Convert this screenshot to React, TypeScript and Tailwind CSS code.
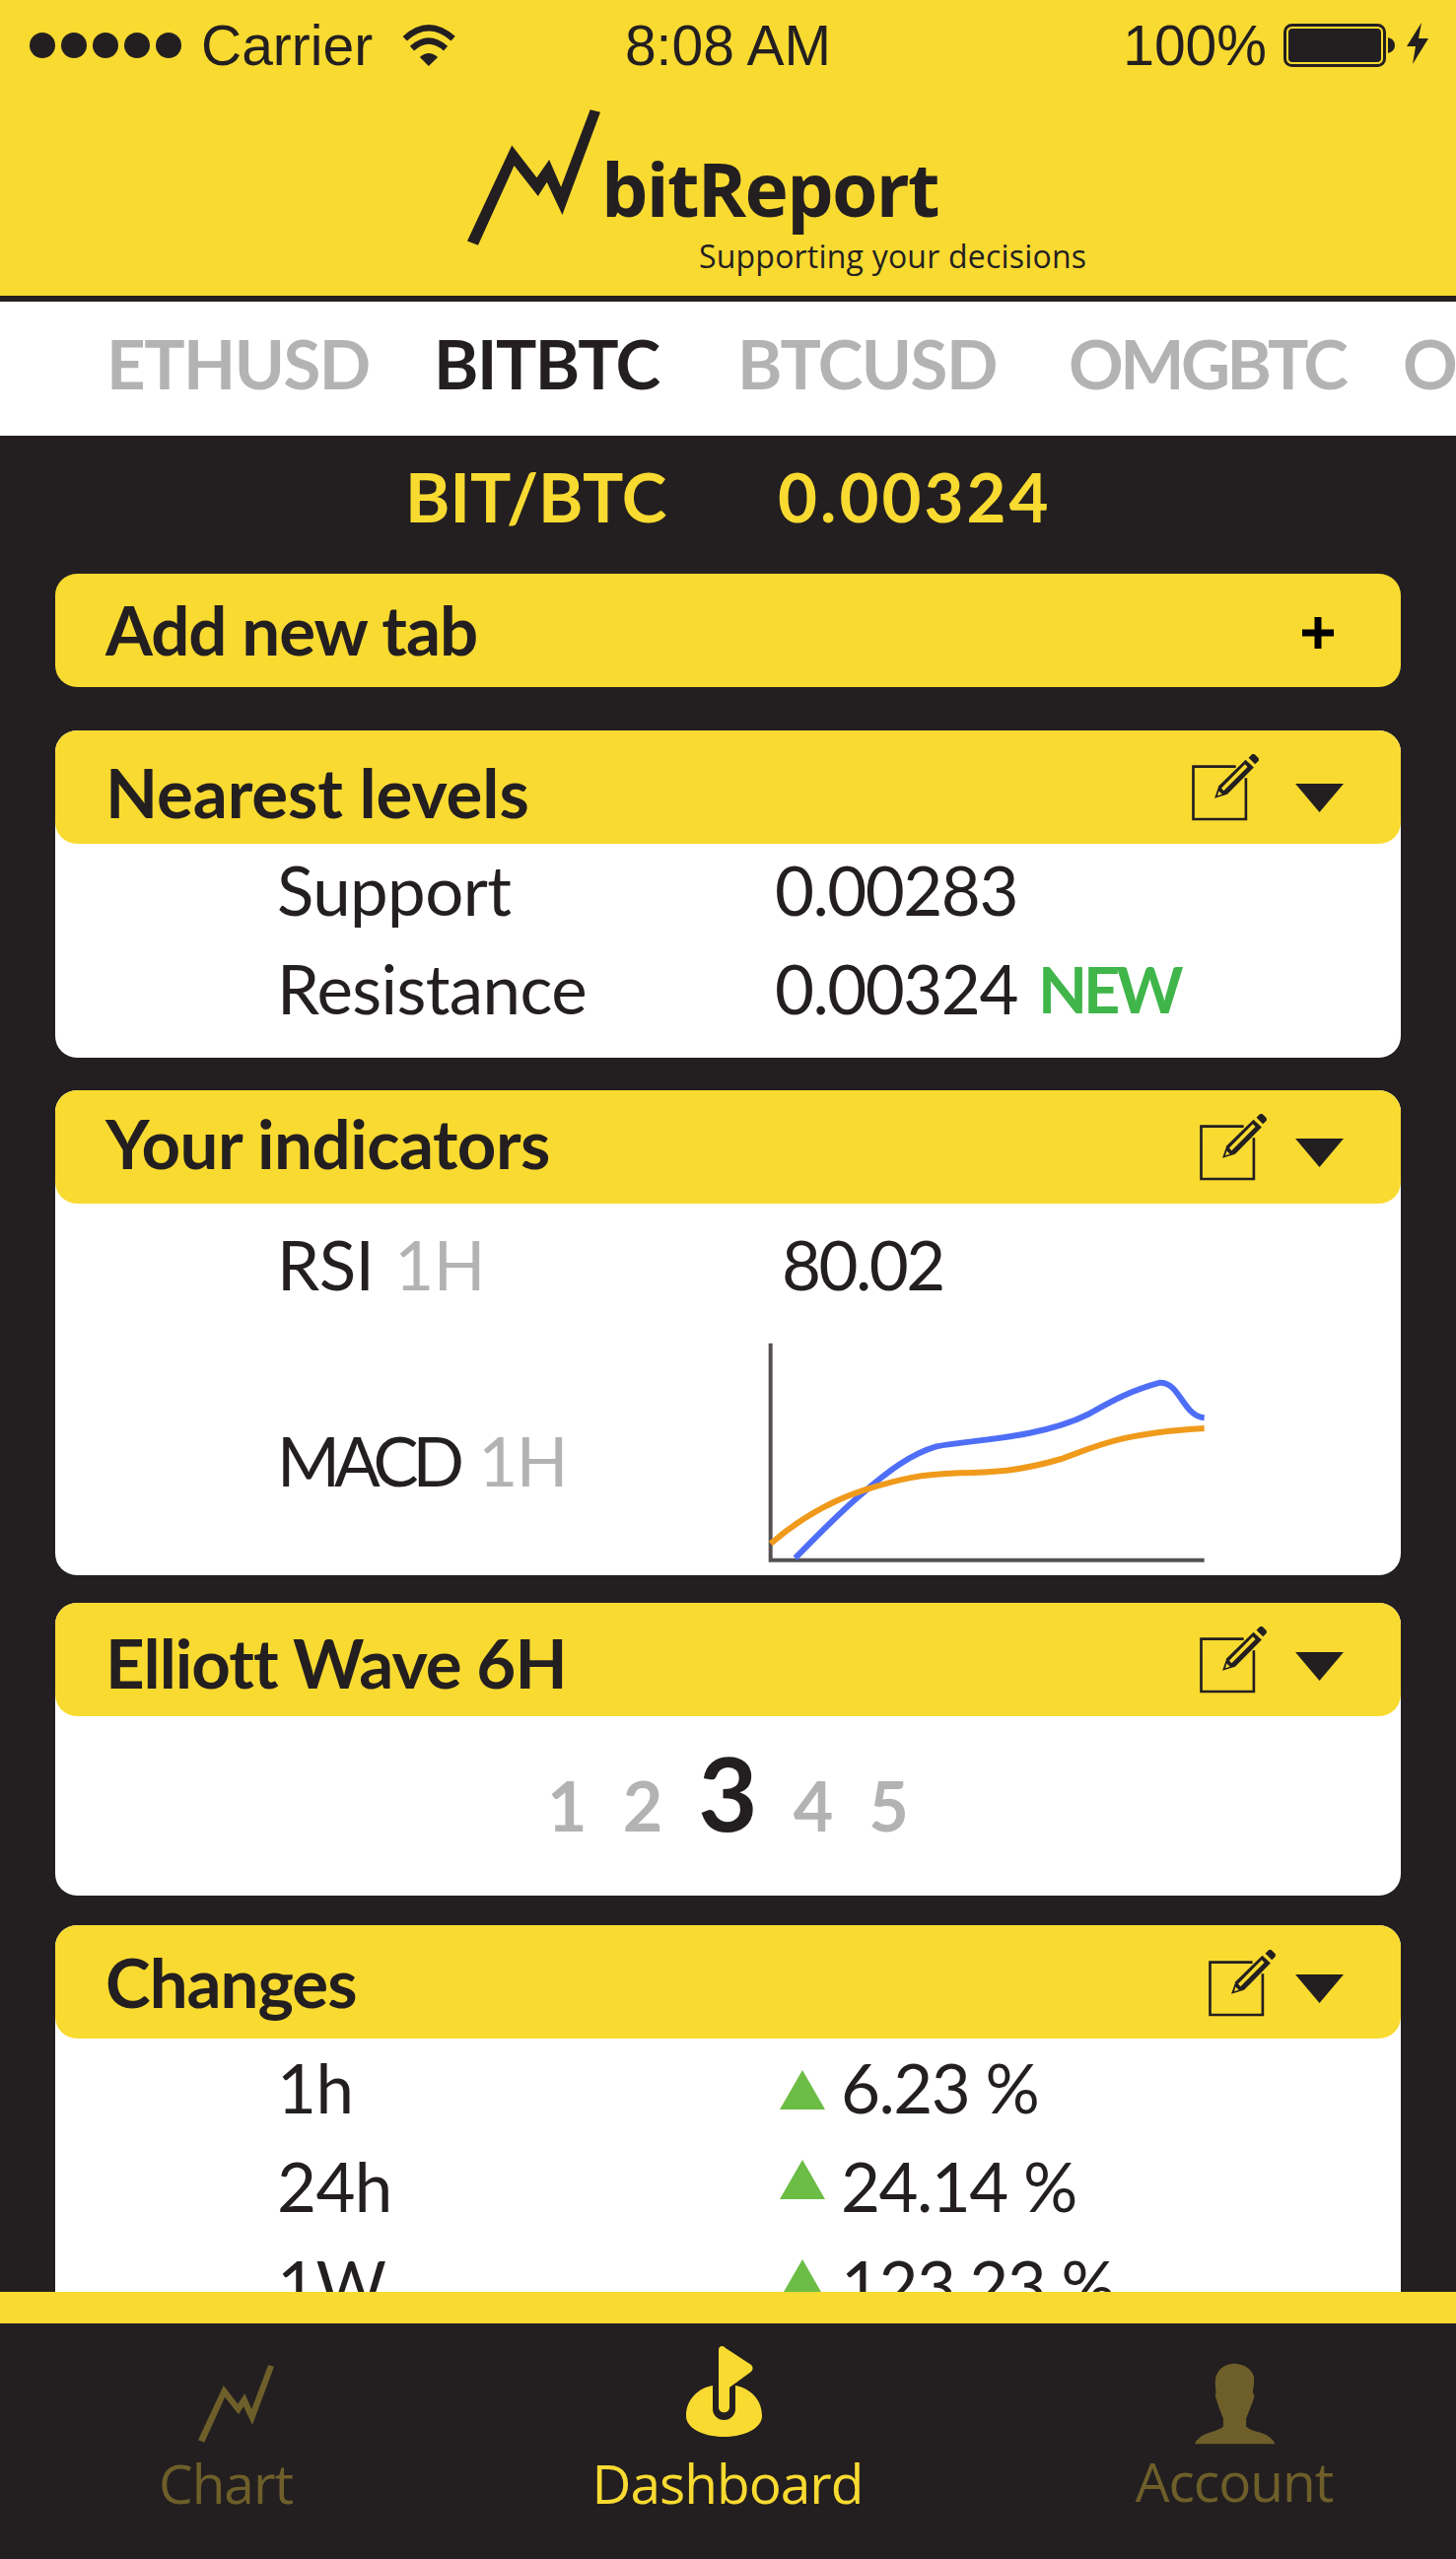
import React from 'react';

const LOGO_POINTS = '102,465 135,478 245,235 318,328 345,285 392,385 508,72 477,64 388,300 352,217 314,272 238,173';

const Logo = ({ className, fill }: { className: string; fill: string }) => (
  <svg viewBox="102 64 406 414" className={className}>
    <polygon points={LOGO_POINTS} fill={fill} />
  </svg>
);

const EditIcon = ({ className }: { className: string }) => (
  <svg viewBox="85 45 210 205" className={`w-[70px] h-[68px] shrink-0 ${className}`}>
    <path d="M222 83H92V244H253V118" fill="none" stroke="#231f20" strokeWidth="8" />
    <polygon points="157,180 170,142 252,62 277,86 196,168" fill="#231f20" />
    <polygon points="178,149 250,76 258,84 185,157" fill="#f9da31" />
    <polygon points="170,158 180,168 166,172" fill="#f9da31" />
    <polygon points="261,56 272,45 279,45 292,58 292,65 281,76" fill="#231f20" />
  </svg>
);

const Arrow = ({ className }: { className: string }) => (
  <svg viewBox="0 0 49 29" className={`w-[49px] h-[29px] shrink-0 ${className}`}>
    <polygon points="0,0 49,0 24.5,29" fill="#231f20" />
  </svg>
);

const Up = ({ className }: { className: string }) => (
  <svg viewBox="0 0 46 40" className={`w-[46px] h-[40px] shrink-0 mr-[16px] ${className}`}>
    <polygon points="23,0 46,40 0,40" fill="#6cbd45" />
  </svg>
);

type CardProps = {
  title: string;
  titleClass: string;
  editClass: string;
  arrowClass: string;
  className: string;
  children: React.ReactNode;
};

const Card = ({ title, titleClass, editClass, arrowClass, className, children }: CardProps) => (
  <div className={`mx-[56px] bg-white rounded-[22px] shrink-0 ${className}`}>
    <div className="h-[115px] bg-[#f9da31] rounded-[22px] flex items-start pl-[51px] pr-[58px]">
      <h2 className={`flex-1 text-[69px] font-bold leading-[80px] ${titleClass}`}>{title}</h2>
      <EditIcon className={editClass} />
      <Arrow className={arrowClass} />
    </div>
    {children}
  </div>
);

const Row = ({ label, children }: { label: React.ReactNode; children: React.ReactNode }) => (
  <div className="flex pl-[225px] text-[69px] leading-[80px] tracking-[-1.5px] whitespace-nowrap">
    <div className="w-[505px] shrink-0 tracking-[-0.6px]">{label}</div>
    <div className="flex items-start">{children}</div>
  </div>
);

export default function App() {
  return (
    <div className="w-[1477px] h-[2596px] flex flex-col overflow-hidden bg-[#231f20] text-[#231f20] font-['Lato',sans-serif]">
      {/* header */}
      <header className="h-[306px] shrink-0 bg-[#f9da31] border-b-[6px] border-[#231f20]">
        <div className="h-[92px] grid grid-cols-3 font-['Liberation_Sans',sans-serif] text-[57px] leading-[92px]">
          <div className="flex items-center pl-[30px]">
            <div className="flex gap-[6px]">
              <span className="w-[26px] h-[26px] rounded-full bg-[#231f20]" />
              <span className="w-[26px] h-[26px] rounded-full bg-[#231f20]" />
              <span className="w-[26px] h-[26px] rounded-full bg-[#231f20]" />
              <span className="w-[26px] h-[26px] rounded-full bg-[#231f20]" />
              <span className="w-[26px] h-[26px] rounded-full bg-[#231f20]" />
            </div>
            <span className="ml-[20px]">Carrier</span>
            <svg viewBox="1165 45 167 127" className="w-[56px] h-[42px] ml-[29px]">
              <path d="M1175 88Q1248 22 1323 88" fill="none" stroke="#231f20" strokeWidth="19" />
              <path d="M1197 118Q1248 72 1300 118" fill="none" stroke="#231f20" strokeWidth="19" />
              <path d="M1221 145Q1248 120 1276 145L1248 172Z" fill="#231f20" />
            </svg>
          </div>
          <div className="text-center">8:08 AM</div>
          <div className="flex items-center justify-end pr-[28px]">
            <span>100%</span>
            <svg viewBox="0 0 113 44" className="w-[113px] h-[44px] ml-[17px] shrink-0">
              <rect x="1.5" y="1.5" width="101" height="41" rx="7" fill="none" stroke="#231f20" strokeWidth="3" />
              <rect x="5" y="5" width="94" height="34" rx="4" fill="#231f20" />
              <path d="M106 14Q113 16 113 22Q113 28 106 30Z" fill="#231f20" />
            </svg>
            <svg viewBox="0 0 22 42" className="w-[22px] h-[42px] ml-[12px] shrink-0 -mt-[4px]">
              <polygon points="15,0 0,24 9,24 6,42 22,16 12,16" fill="#231f20" />
            </svg>
          </div>
        </div>
        <div className="flex pl-[474px] pt-[19px] font-['Open_Sans',sans-serif]">
          <Logo className="w-[135px] h-[138px] shrink-0" fill="#231f20" />
          <div className="ml-[1px] pt-[35px]">
            <div className="text-[75px] font-bold leading-[90px] tracking-[-1.7px]">bitReport</div>
            <div className="ml-[99px] mt-[4px] text-[32px] leading-[40px] tracking-[0.2px] whitespace-nowrap">Supporting your decisions</div>
          </div>
        </div>
      </header>

      {/* pair tabs */}
      <nav className="h-[136px] shrink-0 bg-white flex pl-[108px] overflow-hidden text-[69px] font-bold leading-[126px] tracking-[-1.5px] text-[#b3b3b3] whitespace-nowrap">
        <div className="w-[332px] shrink-0">ETHUSD</div>
        <div className="w-[308px] shrink-0 text-[#231f20]">BITBTC</div>
        <div className="w-[336px] shrink-0">BTCUSD</div>
        <div className="w-[339px] shrink-0 tracking-[-3.5px]">OMGBTC</div>
        <div className="shrink-0">O</div>
      </nav>

      {/* dashboard content */}
      <main className="flex-1 min-h-0 overflow-hidden flex flex-col">
        <div className="flex shrink-0 pt-[22px] pl-[411px] text-[69px] font-bold leading-[80px] text-[#f9da31]">
          <div className="w-[378px]">BIT/BTC</div>
          <div className="tracking-[3px]">0.00324</div>
        </div>

        <div className="mx-[56px] mt-[38px] h-[115px] shrink-0 bg-[#f9da31] rounded-[22px] flex items-start justify-between pl-[51px] pr-[68px] pt-[17px] text-[69px] font-bold leading-[80px] tracking-[-1px]">
          <span>Add new tab</span>
          <svg viewBox="0 0 32 32" className="w-[32px] h-[32px] mt-[27px]">
            <path d="M12.5 0h7v12.5H32v7H19.5V32h-7V19.5H0v-7h12.5z" fill="#000" />
          </svg>
        </div>

        <Card title="Nearest levels" className="mt-[44px]" titleClass="pt-[23px] tracking-[-0.1px]" editClass="mt-[24px]" arrowClass="ml-[36px] mt-[54px]">
          <div className="pt-[7px] pb-[30px] flex flex-col gap-[20px]">
            <Row label="Support">0.00283</Row>
            <Row label="Resistance">
              0.00324<span className="ml-[21px] font-bold text-[65px] tracking-[-4px] text-[#3fb54a]">NEW</span>
            </Row>
          </div>
        </Card>

        <Card title="Your indicators" className="mt-[33px]" titleClass="pt-[14px] tracking-[-0.5px]" editClass="mt-[24px]" arrowClass="ml-[28px] mt-[49px]">
          <div className="pt-[22px] pb-[12px]">
            <Row label={<>RSI <span className="ml-[4px] text-[#b3b3b3]">1H</span></>}>
              <span className="ml-[7px] tracking-[-2.5px]">80.02</span>
            </Row>
            <div className="flex pl-[225px] mt-[37px] text-[69px] leading-[80px] tracking-[-1.5px]">
              <div className="w-[498px] shrink-0 pt-[82px]">
                <span className="tracking-[-6px]">MACD</span> <span className="ml-[4px] text-[#b3b3b3]">1H</span>
              </div>
              <svg viewBox="57 30 1335 678" className="w-[445px] h-[226px] shrink-0">
                <path d="M65 38V698H1385" fill="none" stroke="#555153" strokeWidth="12" />
                <path d="M140 692C210 620 290 540 350 490C420 430 490 375 570 352C640 338 730 335 850 312C930 296 980 280 1030 255C1090 222 1150 185 1250 158C1310 155 1320 260 1385 265" fill="none" stroke="#4f6ef7" strokeWidth="18" />
                <path d="M65 648C150 575 240 520 350 485C460 450 520 437 640 433C740 431 820 428 950 390C1060 350 1130 312 1385 297" fill="none" stroke="#f09a1c" strokeWidth="18" />
              </svg>
            </div>
          </div>
        </Card>

        <Card title="Elliott Wave 6H" className="mt-[28px]" titleClass="pt-[21px] tracking-[-1px]" editClass="mt-[24px]" arrowClass="ml-[28px] mt-[50px]">
          <div className="pt-[25px] pb-[40px] flex items-baseline justify-center gap-[36px] font-bold text-[70px] leading-[104px] text-[#b3b3b3]">
            <span>1</span>
            <span>2</span>
            <span className="text-[104px] text-[#231f20]">3</span>
            <span>4</span>
            <span>5</span>
          </div>
        </Card>

        <Card title="Changes" className="mt-[30px]" titleClass="pt-[18px] tracking-[-1px]" editClass="mt-[25px]" arrowClass="ml-[19px] mt-[50px]">
          <div className="pt-[10px] flex flex-col gap-[20px]">
            <Row label="1h"><span className="ml-[5px] flex"><Up className="mt-[22px]" />6.23 %</span></Row>
            <Row label="24h"><span className="ml-[5px] flex"><Up className="mt-[13px]" />24.14 %</span></Row>
            <Row label="1W"><span className="ml-[5px] flex"><Up className="mt-[14px]" />123.23 %</span></Row>
          </div>
        </Card>
      </main>

      <div className="h-[32px] shrink-0 bg-[#f9da31]" />

      {/* bottom nav */}
      <footer className="h-[239px] shrink-0 flex text-[55px] leading-[64px] text-[#6e5f2a] font-['Open_Sans',sans-serif] tracking-[-1px]">
        <div className="w-[458px] flex flex-col items-center pt-[42px]">
          <Logo className="w-[77px] h-[79px] ml-[20px]" fill="#6e5f2a" />
          <span className="mt-[9px]">Chart</span>
        </div>
        <div className="w-[560px] flex flex-col items-center pt-[22px] text-[#f9da31]">
          <svg viewBox="0 0 77 93" className="w-[77px] h-[93px] -ml-[7px]">
            <path fillRule="evenodd" d="M27 41C11 44 0 56 0 72C0 84 17 93 38 93C60 93 77 84 77 72C77 56 66 44 50 41V65C50 71 45 76 38.500 76C32 76 27 71 27 65Z" fill="#f9da31" />
            <path d="M33 5C33 0 38 0 40 3L66 20C68 22 68 25 66 27L44 43V63C44 70 33 70 33 63Z" fill="#f9da31" />
          </svg>
          <span className="mt-[15px]">Dashboard</span>
        </div>
        <div className="w-[459px] flex flex-col items-center pt-[40px] pl-[9px]">
          <svg viewBox="62 35 250 250" className="w-[85px] h-[83px]">
            <path d="M65 283Q75 258 110 248Q145 238 152 230V205Q140 175 132 150Q125 135 130 125Q125 95 130 75Q145 38 187 37Q232 40 245 75Q248 100 242 125Q250 135 243 150Q232 180 222 205V230Q232 240 265 248Q300 258 310 283Z" fill="#6e5f2a" />
          </svg>
          <span className="mt-[5px]">Account</span>
        </div>
      </footer>
    </div>
  );
}
